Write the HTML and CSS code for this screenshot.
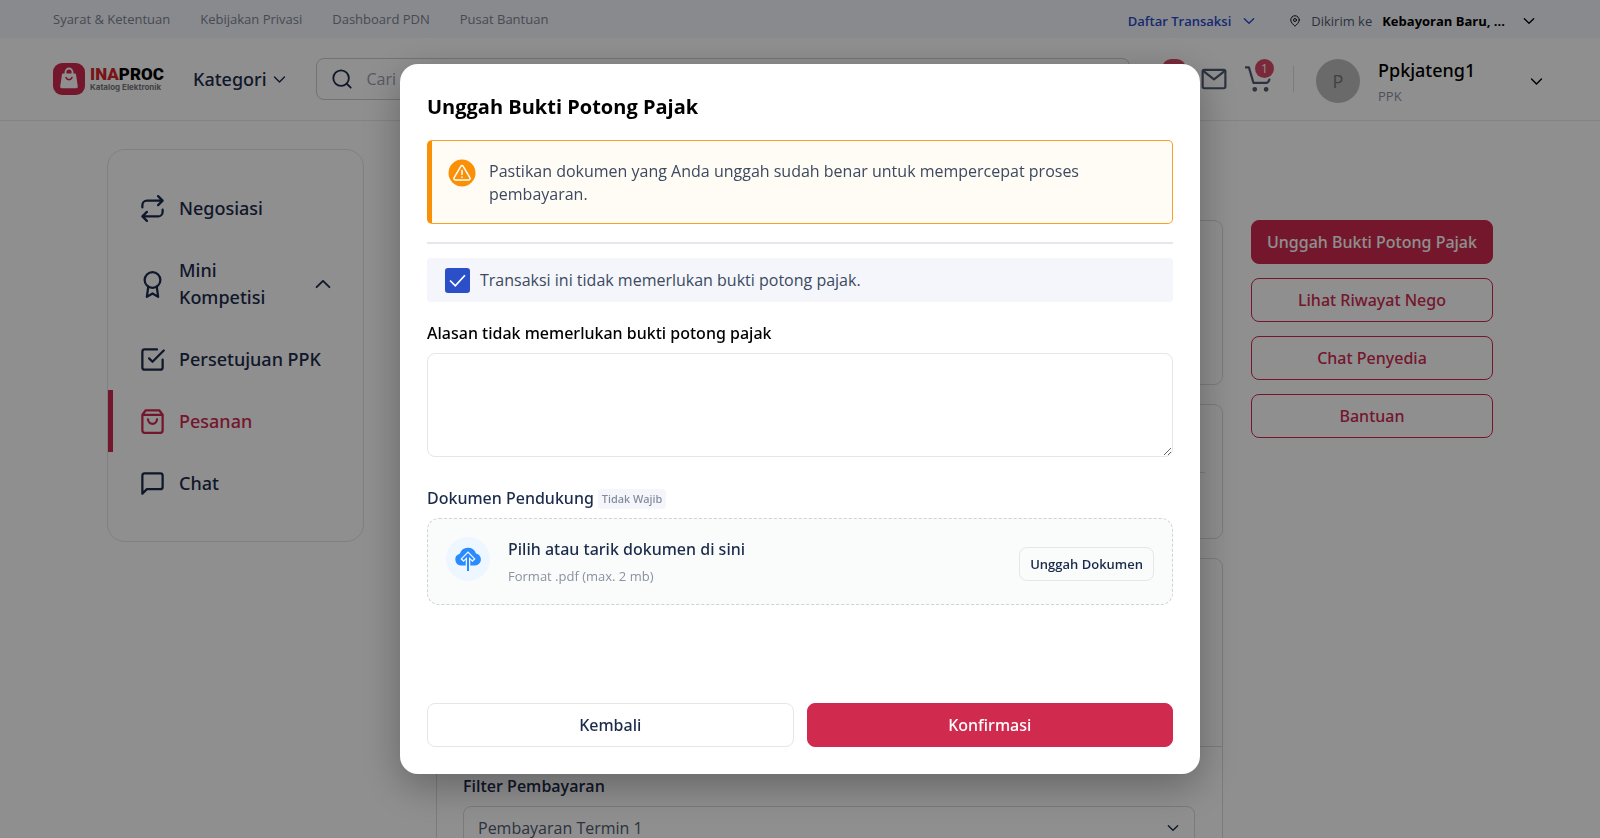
FILE: index.html
```
<!DOCTYPE html>
<html lang="id">
  <head>
    <meta charset="UTF-8">
    <title>INAPROC Katalog Elektronik</title>
    <link rel="stylesheet" href="styles.css">
  </head>
  <body>
    <!-- Shared icon shapes -->
    <svg class="sprite" width="0" height="0">
      <symbol id="chevron-down" viewBox="0 0 24 24"><path d="M5 8.500l7 7 7-7"/></symbol>
      <symbol id="chevron-up" viewBox="0 0 24 24"><path d="M5 15.500l7-7 7 7"/></symbol>
    </svg>

    <div class="topbar">
      <nav class="topbar-links">
        <a href="#">Syarat &amp; Ketentuan</a>
        <a href="#">Kebijakan Privasi</a>
        <a href="#">Dashboard PDN</a>
        <a href="#">Pusat Bantuan</a>
      </nav>
      <div class="topbar-right">
        <button class="transaksi">Daftar Transaksi <svg class="icon chevron"><use href="#chevron-down"/></svg></button>
        <button class="lokasi">
          <svg class="icon pin" viewBox="0 0 24 24"><path d="M20.500 10c0 5-5.500 9.500-8.500 12.500C9 19.500 3.500 15 3.500 10a8.500 8.500 0 0 1 17 0z"/><circle cx="12" cy="10" r="3"/></svg>
          <span>Dikirim ke</span>
          <strong>Kebayoran Baru, ...</strong>
          <svg class="icon chevron"><use href="#chevron-down"/></svg>
        </button>
      </div>
    </div>

    <header class="header">
      <a class="logo" href="#">
        <svg class="logo-mark" viewBox="0 0 32 32">
          <rect width="32" height="32" rx="9" fill="#d12a4f"/>
          <path d="M10 10.500h12a1 1 0 0 1 1 .9l1.800 12.200a1.500 1.500 0 0 1-1.500 1.700H8.700a1.500 1.500 0 0 1-1.500-1.700L9 11.400a1 1 0 0 1 1-.9z" fill="#fff"/>
          <path d="M12.500 11V9a3.500 3.500 0 0 1 7 0v2" fill="none" stroke="#fff" stroke-width="1.800"/>
          <path d="M13 14.500a3.200 3.200 0 0 0 6 0" fill="none" stroke="#d12a4f" stroke-width="1.600" stroke-linecap="round"/>
        </svg>
        <span class="logo-text">
          <span class="logo-name"><span>INA</span>PROC</span>
          <span class="logo-sub">Katalog Elektronik</span>
        </span>
      </a>
      <button class="kategori">Kategori <svg class="icon"><use href="#chevron-down"/></svg></button>
      <label class="search">
        <svg class="icon" viewBox="0 0 24 24"><circle cx="11" cy="11" r="8.500"/><path d="M21.500 21.500l-4.300-4.300"/></svg>
        <input type="text" placeholder="Cari produk" aria-label="Cari produk">
      </label>
      <div class="actions">
        <button class="action" aria-label="Notifikasi">
          <svg class="icon" viewBox="0 0 24 24"><path d="M18 8a6 6 0 0 0-12 0c0 7-3 9-3 9h18s-3-2-3-9M14 21h-4"/></svg>
          <span class="badge badge-wide">9+</span>
        </button>
        <button class="action" aria-label="Pesan">
          <svg class="icon" viewBox="0 0 24 24"><rect x="1.500" y="3.500" width="21" height="17" rx="1.500"/><path d="M2 4.500l10 7.800 10-7.800"/></svg>
        </button>
        <button class="action" aria-label="Keranjang">
          <svg class="icon" viewBox="0 0 24 24"><path d="M.5 1.300h3.100l4.200 14.300h11.700q2 0 3-3"/><circle cx="9" cy="21.500" r="1.200"/><circle cx="19.500" cy="21.500" r="1.200"/></svg>
          <span class="badge">1</span>
        </button>
      </div>
      <button class="profile">
        <span class="avatar">P</span>
        <span class="profile-text">
          <span class="profile-name">Ppkjateng1</span>
          <span class="profile-role">PPK</span>
        </span>
        <svg class="icon"><use href="#chevron-down"/></svg>
      </button>
    </header>

    <main class="page">
      <nav class="sidebar">
        <a href="#">
          <svg class="icon" viewBox="0 0 24 24"><path d="M17 1l4 4-4 4M3 11V9a4 4 0 0 1 4-4h14M7 23l-4-4 4-4M21 13v2a4 4 0 0 1-4 4H3"/></svg>
          <span>Negosiasi</span>
        </a>
        <a href="#">
          <svg class="icon" viewBox="0 0 24 24"><circle cx="12" cy="8" r="7"/><path d="M8.200 13.900L7 23l5-3 5 3-1.200-9.100"/></svg>
          <span>Mini Kompetisi</span>
          <svg class="icon toggle"><use href="#chevron-up"/></svg>
        </a>
        <a href="#">
          <svg class="icon" viewBox="0 0 24 24"><path d="M9 11l3 3L22 4M21 12v7a2 2 0 0 1-2 2H5a2 2 0 0 1-2-2V5a2 2 0 0 1 2-2h11"/></svg>
          <span>Persetujuan PPK</span>
        </a>
        <a href="#" class="active">
          <svg class="icon" viewBox="0 0 24 24"><path d="M6 2L3 6v14a2 2 0 0 0 2 2h14a2 2 0 0 0 2-2V6l-3-4zM3 6h18M16 10a4 4 0 0 1-8 0"/></svg>
          <span>Pesanan</span>
        </a>
        <a href="#">
          <svg class="icon" viewBox="0 0 24 24"><path d="M21 15a2 2 0 0 1-2 2H7l-4 4V5a2 2 0 0 1 2-2h14a2 2 0 0 1 2 2z"/></svg>
          <span>Chat</span>
        </a>
      </nav>

      <div class="detail">
        <section class="card card-info"></section>
        <section class="card card-address"><hr></section>
        <section class="card card-payment">
          <div class="payment-summary"></div>
          <div class="payment-filter">
            <label for="termin">Filter Pembayaran</label>
            <div class="select-box">
              <select id="termin">
                <option>Pembayaran Termin 1</option>
              </select>
              <svg class="icon"><use href="#chevron-down"/></svg>
            </div>
          </div>
        </section>
      </div>

      <aside class="side-actions">
        <button class="btn btn-primary">Unggah Bukti Potong Pajak</button>
        <button class="btn btn-outline">Lihat Riwayat Nego</button>
        <button class="btn btn-outline">Chat Penyedia</button>
        <button class="btn btn-outline">Bantuan</button>
      </aside>
    </main>

    <!-- Upload dialog -->
    <div class="overlay">
      <div class="modal" role="dialog" aria-labelledby="modal-title">
        <h2 id="modal-title">Unggah Bukti Potong Pajak</h2>

        <div class="alert">
          <svg class="alert-icon" viewBox="0 0 28 28">
            <circle cx="14" cy="14" r="13.500" fill="#fa9005"/>
            <path d="M12.800 7.300L6 18.800a1.400 1.400 0 0 0 1.200 2.100h13.600a1.400 1.400 0 0 0 1.200-2.100L15.200 7.300a1.400 1.400 0 0 0-2.400 0zM14 11.500v4M14 18v.3" fill="none" stroke="#fff" stroke-width="1.500" stroke-linecap="round" stroke-linejoin="round"/>
          </svg>
          <p>Pastikan dokumen yang Anda unggah sudah benar untuk mempercepat proses pembayaran.</p>
        </div>

        <hr class="divider">

        <label class="check-row">
          <input type="checkbox" checked>
          <svg class="check-mark" viewBox="0 0 24 24"><path d="M3.500 12l6 6L20.500 6"/></svg>
          <span>Transaksi ini tidak memerlukan bukti potong pajak.</span>
        </label>

        <label class="field-label" for="alasan">Alasan tidak memerlukan bukti potong pajak</label>
        <textarea id="alasan"></textarea>

        <div class="doc-label">Dokumen Pendukung <span class="tag">Tidak Wajib</span></div>
        <div class="dropzone">
          <span class="drop-icon">
            <svg viewBox="0 0 28 28">
              <path d="M7 20.500a6 6 0 0 1-1.200-11.800A8.500 8.500 0 0 1 22 8.600a6 6 0 0 1-.9 11.900z" fill="#2a8bff"/>
              <path d="M14 10v15M8 15.500l6-6 6 6" fill="none" stroke="#eef6ff" stroke-width="4.500"/>
              <path d="M14 10v16M9 14.500l5-5 5 5" fill="none" stroke="#2a8bff" stroke-width="2"/>
            </svg>
          </span>
          <div class="drop-text">
            <p class="drop-title">Pilih atau tarik dokumen di sini</p>
            <p class="drop-hint">Format .pdf (max. 2 mb)</p>
          </div>
          <button class="btn-upload">Unggah Dokumen</button>
        </div>

        <div class="modal-footer">
          <button class="btn btn-plain">Kembali</button>
          <button class="btn btn-primary">Konfirmasi</button>
        </div>
      </div>
    </div>
  </body>
</html>
```
FILE: styles.css
```
* {
  box-sizing: border-box;
}
html, body {
  height: 100%;
}
body {
  margin: 0;
  overflow: hidden;
  font-family: "Open Sans", "Noto Sans", sans-serif;
  font-size: 16px;
  color: #1b2b4b;
  background: #fff;
}
a {
  color: inherit;
  text-decoration: none;
}
button {
  font: inherit;
  color: inherit;
  background: none;
  border: none;
  padding: 0;
  cursor: pointer;
}
p, h2, hr {
  margin: 0;
}
.sprite {
  position: absolute;
}
.icon {
  flex: none;
  fill: none;
  stroke: currentColor;
  stroke-width: 2;
  stroke-linecap: round;
  stroke-linejoin: round;
}

/* Top bar */
.topbar {
  display: flex;
  justify-content: space-between;
  height: 38px;
  padding: 0 63px 0 53px;
  background: #f4f6fb;
  font-size: 13px;
}
.topbar-links {
  display: flex;
  align-items: center;
  gap: 30px;
  color: #7d8595;
}
.topbar-right {
  display: flex;
  align-items: center;
  gap: 32px;
  padding-top: 4px;
}
.transaksi, .lokasi {
  display: flex;
  align-items: center;
}
.transaksi {
  gap: 10px;
  font-weight: 600;
  color: #2b4acb;
}
.lokasi {
  gap: 10px;
  color: #4f5a70;
}
.lokasi strong {
  color: #000;
}
.lokasi .chevron {
  margin-left: 6px;
  color: #000;
}
.chevron {
  width: 16px;
  height: 16px;
  stroke-width: 2;
}
.pin {
  width: 12px;
  height: 12px;
  color: #111;
}

/* Header */
.header {
  display: flex;
  align-items: center;
  height: 83px;
  padding: 0 55px 0 53px;
  border-bottom: 1px solid #e8e9ec;
}
.logo {
  display: flex;
  align-items: center;
  gap: 5px;
  width: 112px;
}
.logo-mark {
  flex: none;
  width: 32px;
  height: 32px;
}
.logo-text {
  display: flex;
  flex-direction: column;
  white-space: nowrap;
}
.logo-name {
  font: 900 17px/16px Roboto, sans-serif;
  color: #000;
}
.logo-name span {
  color: #d6262e;
}
.logo-sub {
  font: 700 8px/10px Inter, sans-serif;
  color: #777;
}
.kategori {
  display: flex;
  align-items: center;
  gap: 4px;
  margin-left: 28px;
  font-family: "Noto Sans", sans-serif;
  font-size: 18px;
  font-weight: 500;
}
.kategori .icon {
  width: 17px;
  height: 17px;
}
.search {
  display: flex;
  align-items: center;
  gap: 12px;
  flex: 1;
  height: 42px;
  margin: 0 27px 0 28px;
  padding: 0 14px;
  border: 1px solid #c9cdd4;
  border-radius: 8px;
}
.search .icon {
  width: 22px;
  height: 22px;
}
.search input {
  flex: 1;
  border: none;
  outline: none;
  background: none;
  font: inherit;
}
.search input::placeholder {
  color: #9aa1af;
}
.actions {
  display: flex;
  gap: 18px;
  padding-right: 22px;
  border-right: 1px solid #dcdee3;
  color: #4f5a70;
}
.action {
  position: relative;
  height: 26px;
}
.action .icon {
  width: 26px;
  height: 26px;
}
.badge {
  position: absolute;
  top: -7px;
  right: -3px;
  min-width: 19px;
  height: 19px;
  border-radius: 10px;
  background: #d94a68;
  color: #fff;
  font-size: 12px;
  line-height: 19px;
}
.badge-wide {
  min-width: 24px;
}
.profile {
  display: flex;
  align-items: center;
  margin-top: 4px;
  margin-left: 22px;
  text-align: left;
}
.avatar {
  width: 44px;
  height: 44px;
  margin-right: 18px;
  border-radius: 50%;
  background: #bdbdbd;
  color: #757575;
  font-size: 18px;
  line-height: 44px;
  text-align: center;
}
.profile-text {
  display: flex;
  flex-direction: column;
  width: 150px;
  padding-top: 4px;
}
.profile-name {
  color: #000;
  font-family: "Noto Sans", sans-serif;
  font-size: 18px;
  font-weight: 500;
  line-height: 26px;
}
.profile-role {
  color: #8a91a0;
  font-size: 13px;
  line-height: 26px;
}
.profile .icon {
  width: 17px;
  height: 17px;
  color: #000;
}

/* Page */
.page {
  display: grid;
  grid-template-columns: 257px 1fr 242px;
  align-items: start;
  padding: 28px 107px 0;
}
.sidebar {
  padding: 27px 0;
  border: 1px solid #e2e4e8;
  border-radius: 18px;
  font-family: "Noto Sans", sans-serif;
  font-size: 18px;
  font-weight: 500;
  line-height: 27px;
}
.sidebar a {
  display: flex;
  align-items: center;
  gap: 13px;
  padding: 18px 32px 17px 26px;
  border-left: 5px solid transparent;
}
.sidebar .icon {
  width: 27px;
  height: 27px;
}
.sidebar .toggle {
  width: 22px;
  height: 22px;
  margin: 0 -3px 0 auto;
}
.sidebar .active {
  color: #cf2a50;
  border-left-color: #cf2a50;
}
.detail {
  display: flex;
  flex-direction: column;
  gap: 19px;
  margin: 71px 28px 0 72px;
}
.card {
  border: 1px solid #d9dce1;
  border-radius: 9px;
}
.card-info {
  height: 165px;
}
.card-address {
  height: 135px;
  padding: 67px 17px 0;
}
.card-address hr {
  border: none;
  border-top: 1px solid #d9dce1;
}
.card-payment {
  height: 340px;
}
.payment-summary {
  height: 188px;
  border-bottom: 1px solid #d9dce1;
}
.payment-filter {
  padding: 27px 27px 0 26px;
}
.payment-filter label {
  display: block;
  font-weight: 600;
  line-height: 24px;
}
.select-box {
  position: relative;
  margin-top: 8px;
}
.select-box select {
  width: 100%;
  height: 44px;
  padding: 0 14px;
  border: 1px solid #d9dce1;
  border-radius: 8px;
  appearance: none;
  background: none;
  font: inherit;
  color: #4f5a70;
}
.select-box .icon {
  position: absolute;
  top: 14px;
  right: 14px;
  width: 16px;
  height: 16px;
}
.side-actions {
  display: flex;
  flex-direction: column;
  gap: 14px;
  margin-top: 71px;
}

/* Buttons */
.btn {
  height: 44px;
  border: 1px solid #cf2a50;
  border-radius: 8px;
  font-family: "Noto Sans", sans-serif;
  font-weight: 500;
}
.btn-primary {
  background: #d12a4f;
  color: #fff;
}
.btn-outline {
  color: #cf2a50;
}
.btn-plain {
  border-color: #e4e6eb;
}

/* Modal */
.overlay {
  position: fixed;
  inset: 0;
  display: flex;
  align-items: center;
  justify-content: center;
  background: rgba(0, 0, 0, 0.44);
}
.modal {
  width: 50%;
  min-width: 600px;
  padding: 29px 27px 27px;
  border-radius: 18px;
  background: #fff;
  box-shadow: 0 12px 40px rgba(0, 0, 0, 0.3);
}
.modal h2 {
  color: #000;
  font-size: 20px;
  font-weight: 700;
  line-height: 28px;
}
.alert {
  display: flex;
  gap: 13px;
  margin-top: 19px;
  padding: 18px 80px 18px 16px;
  border: 1px solid #fa9f28;
  border-left: 5px solid #fa9005;
  border-radius: 5px;
  background: #fffcf5;
  color: #3c4960;
  line-height: 23px;
}
.alert p {
  padding-top: 1px;
  margin-bottom: -1px;
}
.alert-icon {
  flex: none;
  width: 28px;
  height: 28px;
}
.divider {
  height: 2px;
  margin: 18px 0 14px;
  border: none;
  background: #e5e7ee;
}
.check-row {
  position: relative;
  display: flex;
  align-items: center;
  gap: 10px;
  height: 44px;
  padding: 0 18px;
  border-radius: 4px;
  background: #f4f6fb;
  color: #3c4960;
}
.check-row input {
  appearance: none;
  width: 25px;
  height: 25px;
  margin: 0;
  border-radius: 3px;
}
.check-row input:checked {
  background: #2b4fc8;
}
.check-mark {
  position: absolute;
  left: 20px;
  width: 21px;
  height: 21px;
  fill: none;
  stroke: #fff;
  stroke-width: 2;
}
.field-label {
  display: block;
  margin: 19px 0 8px;
  color: #000;
  font-family: "Noto Sans", sans-serif;
  font-weight: 500;
  line-height: 24px;
}
textarea {
  display: block;
  width: 100%;
  height: 104px;
  padding: 12px;
  border: 1px solid #e4e6eb;
  border-radius: 8px;
  font: inherit;
}
.doc-label {
  display: flex;
  align-items: center;
  gap: 4px;
  margin: 29px 0 8px;
  font-family: "Noto Sans", sans-serif;
  font-weight: 500;
  line-height: 24px;
}
.tag {
  margin-top: 2px;
  padding: 0 4px;
  border-radius: 4px;
  background: #f4f6fb;
  color: #838b9a;
  font-size: 11px;
  font-weight: 500;
  line-height: 20px;
}
.dropzone {
  display: flex;
  align-items: flex-start;
  gap: 18px;
  padding: 18px;
  border: 1px dashed #cdd3d8;
  border-radius: 12px;
  background: #fafcfc;
}
.drop-icon {
  display: flex;
  align-items: center;
  justify-content: center;
  width: 44px;
  height: 44px;
  border-radius: 50%;
  background: #eef6ff;
}
.drop-icon svg {
  width: 28px;
  height: 28px;
}
.drop-text {
  flex: 1;
}
.drop-title {
  font-family: "Noto Sans", sans-serif;
  font-weight: 500;
  line-height: 24px;
}
.drop-hint {
  margin-top: 6px;
  color: #8a91a0;
  font-size: 13px;
  line-height: 19px;
}
.btn-upload {
  align-self: flex-end;
  height: 34px;
  margin-bottom: 5px;
  padding: 0 10px;
  border: 1px solid #e4e6eb;
  border-radius: 8px;
  font-size: 13px;
  font-weight: 600;
}
.modal-footer {
  display: grid;
  grid-template-columns: 1fr 1fr;
  gap: 13px;
  margin-top: 98px;
}
```
